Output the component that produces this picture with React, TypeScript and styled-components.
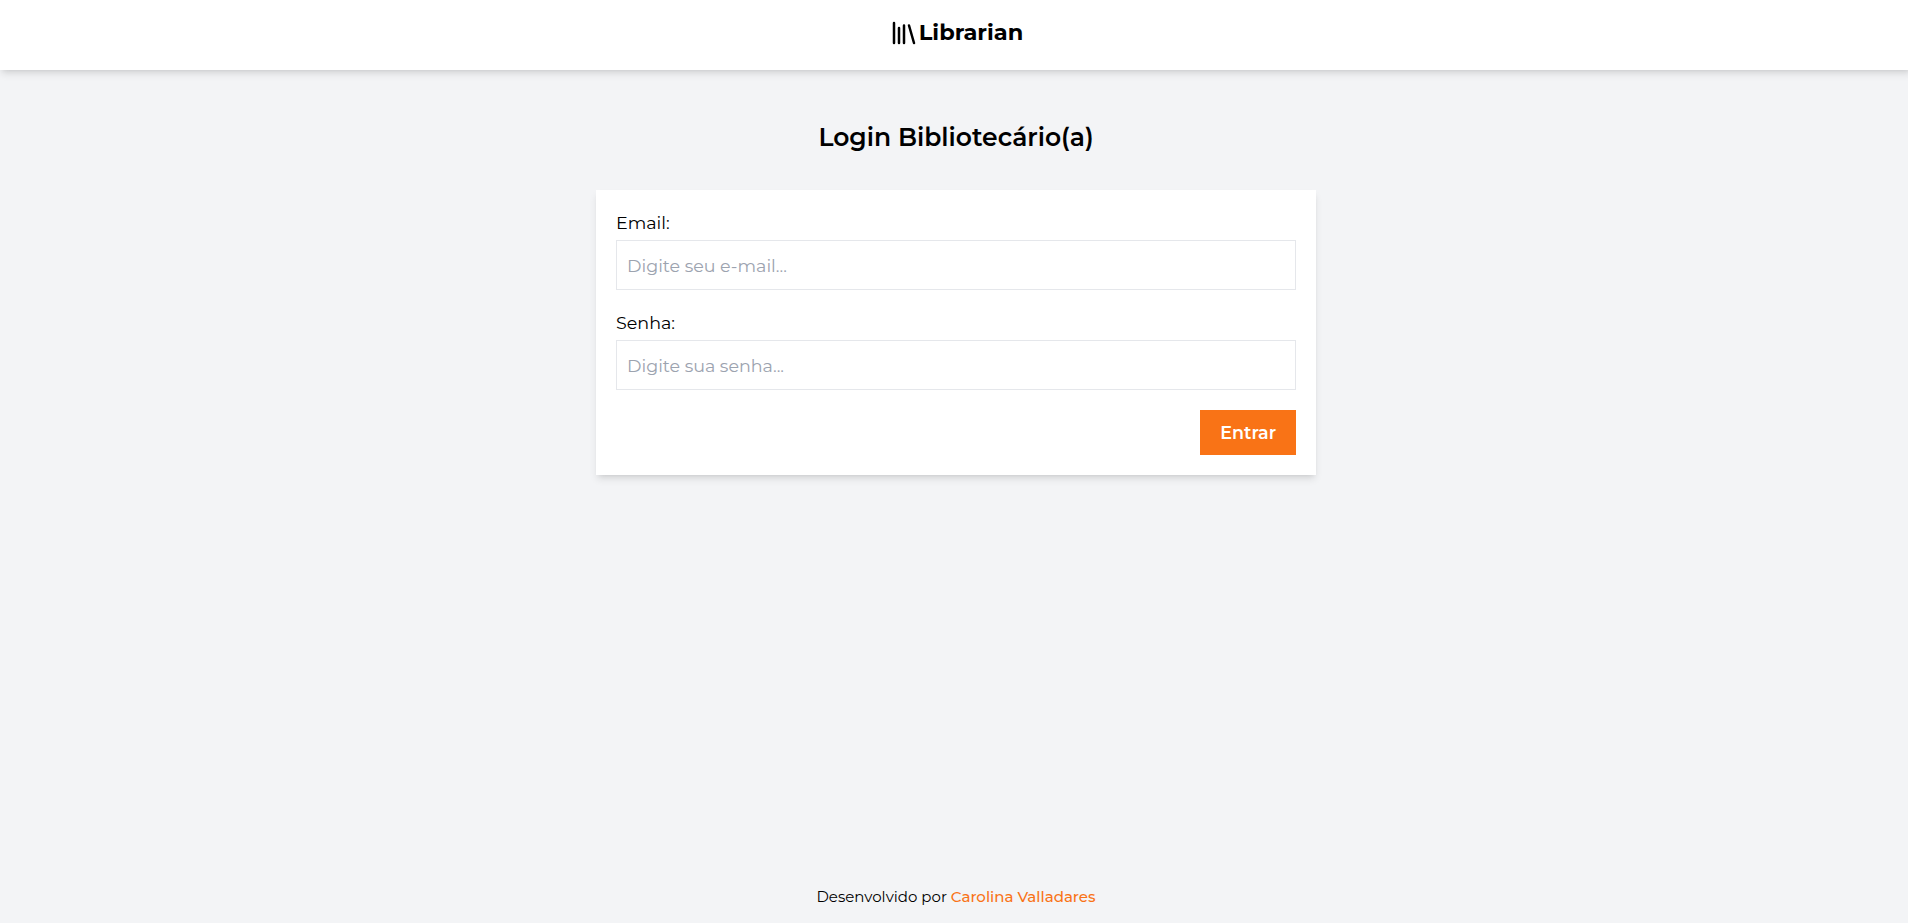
import React from 'react';
import styled, { createGlobalStyle } from 'styled-components';

const shadow = '0 5px 7.5px -1.25px rgba(0, 0, 0, 0.1), 0 2.5px 5px -2.5px rgba(0, 0, 0, 0.1)';

const GlobalStyle = createGlobalStyle`
  *, *::before, *::after { box-sizing: border-box; }
  html, body { margin: 0; overflow: hidden; }
  body {
    background: #f3f4f6;
    color: #000;
    font-family: Montserrat, Inter, 'Open Sans', sans-serif;
    font-size: 17.5px;
    line-height: 25px;
  }
`;

const Page = styled.div`
  display: flex;
  flex-direction: column;
  align-items: center;
  width: 1912px;
  height: 923px;
`;

const Header = styled.header`
  display: flex;
  justify-content: center;
  flex: none;
  width: 100%;
  height: 70px;
  padding-top: 18px;
  background: #fff;
  box-shadow: ${shadow};
`;

const Brand = styled.a`
  display: flex;
  height: 30px;
  color: #000;
`;

const BrandName = styled.span`
  font-size: 22.5px;
  font-weight: 700;
  line-height: 28px;
  white-space: nowrap;
`;

const Title = styled.h1`
  margin: 50px 0 35px;
  font-size: 25px;
  font-weight: 600;
  line-height: 35px;
`;

const Card = styled.form`
  display: flex;
  flex-direction: column;
  width: 720px;
  height: 285px;
  padding: 20px;
  background: #fff;
  box-shadow: ${shadow};
`;

const Field = styled.div`
  display: flex;
  flex-direction: column;
  margin-bottom: 20px;
`;

const Label = styled.label`
  margin-bottom: 5px;
`;

const Input = styled.input`
  height: 50px;
  padding: 0 10px;
  border: 1px solid #e5e7eb;
  border-radius: 0;
  outline: none;
  background: #fff;
  font: inherit;
  &::placeholder { color: #9ca3af; opacity: 1; }
`;

const Submit = styled.button`
  align-self: flex-end;
  height: 45px;
  padding: 0 20px;
  border: 0;
  background: #f97316;
  color: #fff;
  font: inherit;
  font-weight: 600;
`;

const Footer = styled.footer`
  margin-top: auto;
  padding-bottom: 14px;
  font-size: 15px;
`;

const AuthorLink = styled.a`
  color: #f97316;
  font-weight: 500;
`;

function BooksIcon() {
  return (
    <svg width="30" height="30" viewBox="0 0 24 24" fill="none" stroke="currentColor" strokeWidth="2" strokeLinecap="round" strokeLinejoin="round" aria-hidden="true">
      <path d="M4 4v16M8 8v12M12 6v14M16 6l4 14" />
    </svg>
  );
}

export default function App() {
  return (
    <>
      <GlobalStyle />
      <Page>
        <Header>
          <Brand>
            <BooksIcon />
            <BrandName>Librarian</BrandName>
          </Brand>
        </Header>
        <Title>Login Bibliotecário(a)</Title>
        <Card>
          <Field>
            <Label htmlFor="email">Email:</Label>
            <Input id="email" type="email" placeholder="Digite seu e-mail..." />
          </Field>
          <Field>
            <Label htmlFor="senha">Senha:</Label>
            <Input id="senha" type="password" placeholder="Digite sua senha..." />
          </Field>
          <Submit type="button">Entrar</Submit>
        </Card>
        <Footer>
          Desenvolvido por <AuthorLink>Carolina Valladares</AuthorLink>
        </Footer>
      </Page>
    </>
  );
}
